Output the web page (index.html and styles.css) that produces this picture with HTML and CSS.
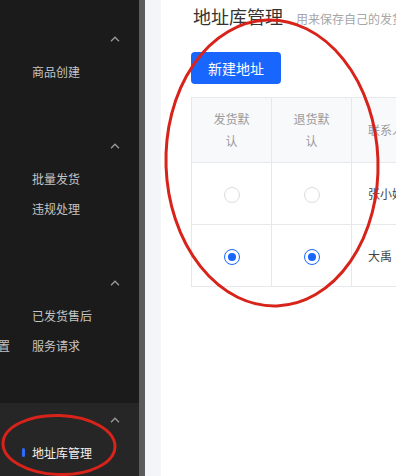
FILE: index.html
```html
<!DOCTYPE html>
<html lang="zh-CN">
<head>
<meta charset="utf-8">
<title>地址库管理</title>
<link rel="stylesheet" href="styles.css">
</head>
<body>
<div class="app">
  <aside class="sidebar">
    <div class="group">
      <div class="ghead"><svg class="chev" width="10" height="6" viewBox="0 0 10 6"><polyline points="1,5.2 5,1.2 9,5.2" fill="none" stroke="#9a9a9a" stroke-width="1.3"/></svg></div>
      <div class="item"><span class="lead"></span><span class="label">商品创建</span></div>
    </div>
    <div class="group">
      <div class="ghead"><svg class="chev" width="10" height="6" viewBox="0 0 10 6"><polyline points="1,5.2 5,1.2 9,5.2" fill="none" stroke="#9a9a9a" stroke-width="1.3"/></svg></div>
      <div class="item"><span class="lead"></span><span class="label">批量发货</span></div>
      <div class="item"><span class="lead"></span><span class="label">违规处理</span></div>
    </div>
    <div class="group">
      <div class="ghead"><svg class="chev" width="10" height="6" viewBox="0 0 10 6"><polyline points="1,5.2 5,1.2 9,5.2" fill="none" stroke="#9a9a9a" stroke-width="1.3"/></svg></div>
      <div class="item"><span class="lead"></span><span class="label">已发货售后</span></div>
      <div class="item"><span class="lead cut">置</span><span class="label">服务请求</span></div>
    </div>
    <div class="group last">
      <div class="ghead"><svg class="chev" width="10" height="6" viewBox="0 0 10 6"><polyline points="1,5.2 5,1.2 9,5.2" fill="none" stroke="#9a9a9a" stroke-width="1.3"/></svg></div>
      <div class="item active"><span class="lead"><i class="bar"></i></span><span class="label">地址库管理</span></div>
    </div>
  </aside>
  <div class="scrollbar"></div>
  <div class="gutter"></div>
  <main class="main">
    <div class="titlebar">
      <h1 class="title">地址库管理</h1>
      <span class="sub">用来保存自己的发货、退货地址，您最多可添加20条</span>
    </div>
    <button class="btn">新建地址</button>
    <table class="tbl">
      <colgroup><col class="c1"><col class="c2"><col class="c3"><col class="c4"></colgroup>
      <thead>
        <tr><th class="ctr">发货默认</th><th class="ctr">退货默认</th><th class="left">联系人</th><th class="left">所在地区</th></tr>
      </thead>
      <tbody>
        <tr><td class="ctr"><span class="radio"></span></td><td class="ctr"><span class="radio"></span></td><td class="left">张小娟</td><td class="left">浙江省</td></tr>
        <tr><td class="ctr"><span class="radio on"></span></td><td class="ctr"><span class="radio on"></span></td><td class="left">大禹</td><td class="left">浙江省</td></tr>
      </tbody>
    </table>
  </main>
  <svg class="marks" width="396" height="476" viewBox="0 0 396 476">
    <ellipse cx="272" cy="163" rx="106" ry="143" transform="rotate(-2 272 163)" fill="none" stroke="#d8231b" stroke-width="3"/>
    <ellipse cx="59" cy="445" rx="56" ry="29.5" transform="rotate(2 59 445)" fill="none" stroke="#d8231b" stroke-width="3"/>
  </svg>
</div>
</body>
</html>
```

FILE: styles.css
```css
* { box-sizing: border-box; }
html, body { margin: 0; padding: 0; }
body {
  font-family: "Noto Sans CJK SC", "Noto Sans", sans-serif;
  width: 396px;
  height: 476px;
  overflow: hidden;
  background: #fff;
}
.app {
  position: relative;
  display: flex;
  height: 476px;
  overflow: hidden;
}
.sidebar {
  width: 139px;
  flex: none;
  background: #1b1b1b;
  display: flex;
  flex-direction: column;
  padding-top: 22px;
}
.group { padding-bottom: 41px; }
.group.last {
  flex: 1;
  background: #262626;
  padding-bottom: 0;
}
.ghead {
  height: 36px;
  display: flex;
  align-items: flex-start;
  justify-content: flex-end;
  padding-top: 14px;
  padding-right: 19px;
}
.chev { display: block; }
.item {
  height: 30px;
  display: flex;
  align-items: center;
  padding-bottom: 3px;
  font-size: 12px;
  color: #c4c4c4;
  white-space: nowrap;
}
.lead {
  width: 32px;
  flex: none;
  display: flex;
  align-items: center;
}
.lead.cut { text-indent: -2px; overflow: visible; }
.item.active { color: #f2f2f2; }
.bar {
  display: block;
  width: 3px;
  height: 9px;
  margin-left: 22px;
  border-radius: 2px;
  background: #2f6bff;
}
.scrollbar { width: 6px; flex: none; background: #5b5b5b; }
.gutter { width: 16px; flex: none; background: #f4f5f9; }
.main {
  flex: 1;
  min-width: 0;
  overflow: hidden;
  padding-left: 30px;
  background: #fff;
}
.titlebar {
  display: flex;
  align-items: baseline;
  height: 32px;
  white-space: nowrap;
}
.title {
  margin: 0;
  font-size: 18px;
  font-weight: 400;
  line-height: 32px;
  color: #333;
  margin-left: 2px;
}
.sub {
  margin-left: 13px;
  font-size: 12px;
  color: #a6a6a6;
}
.btn {
  display: block;
  margin-top: 20px;
  width: 90px;
  height: 32px;
  border: 0;
  border-radius: 4px;
  background: #1966ff;
  color: #fff;
  font-family: inherit;
  font-size: 14px;
  padding: 0;
}
.tbl {
  margin-top: 13px;
  border-collapse: collapse;
  table-layout: fixed;
  width: 420px;
  font-size: 12px;
}
.c1, .c2 { width: 80px; }
.c3 { width: 130px; }
.c4 { width: 130px; }
.tbl th, .tbl td {
  border: 1px solid #e6e8eb;
  padding: 0;
}
.tbl th {
  height: 65px;
  background: #f8f9fb;
  font-weight: 400;
  color: #9a9a9a;
  line-height: 22px;
}
.tbl th.ctr { padding: 0 20px; }
.tbl td { height: 62px; color: #444; }
.ctr { text-align: center; }
.left { text-align: left; padding-left: 16px !important; }
.radio {
  display: inline-flex;
  align-items: center;
  justify-content: center;
  width: 16px;
  height: 16px;
  border: 1px solid #dcdcdc;
  border-radius: 50%;
  background: #fff;
  vertical-align: middle;
}
.radio.on { border-color: #1966ff; }
.radio.on::after {
  content: "";
  width: 8px;
  height: 8px;
  border-radius: 50%;
  background: #1966ff;
}
.marks {
  position: absolute;
  left: 0;
  top: 0;
  pointer-events: none;
}
```
